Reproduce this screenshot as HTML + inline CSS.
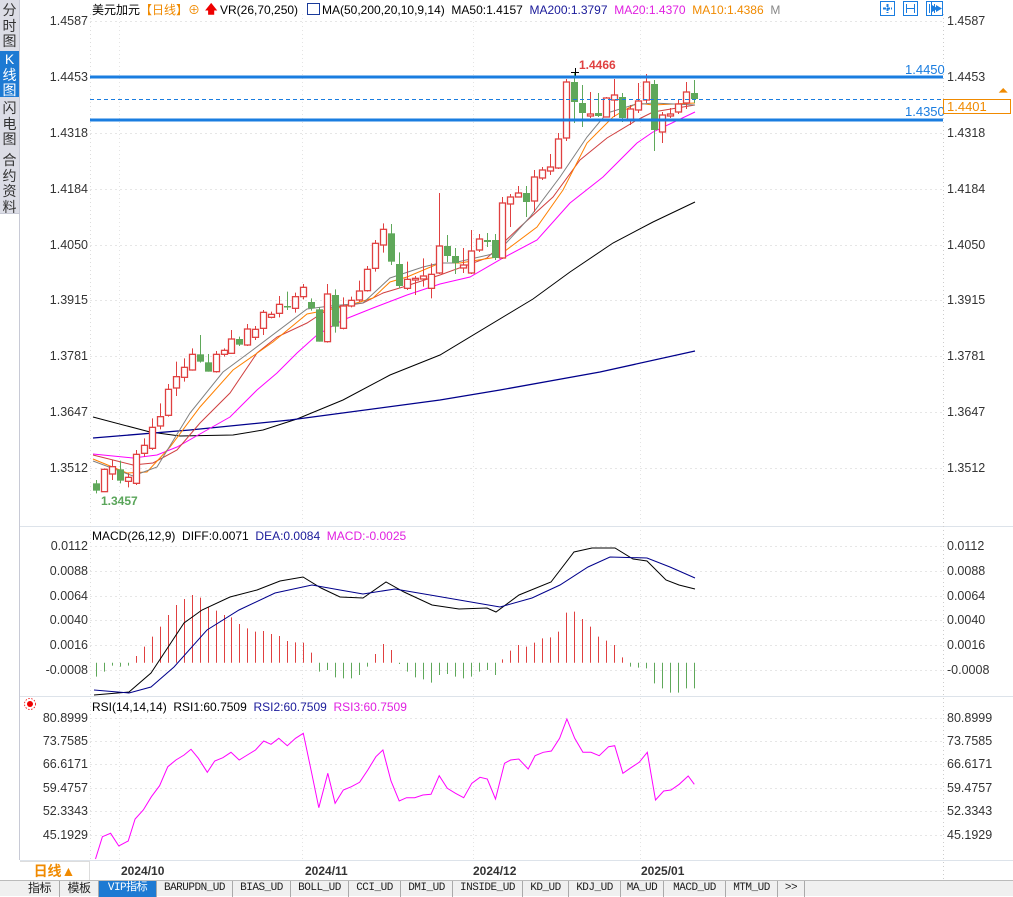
<!DOCTYPE html>
<html><head><meta charset="utf-8"><style>
*{margin:0;padding:0;box-sizing:border-box}
body{width:1013px;height:896px;overflow:hidden;background:#fff;font-family:"Liberation Sans","Noto Sans CJK SC",sans-serif;position:relative}
.sb{position:absolute;left:0;top:0;width:20px;height:213px;background:#dcdde6;border-right:1px solid #c8cad6}
.sb div{position:absolute;left:0;width:19px;font-size:14px;line-height:15.5px;text-align:center;color:#333}
.sbw{position:absolute;left:0;top:213px;width:20px;height:647px;border-right:1px solid #c8cad6;border-top:1px solid #c8cad6}
.t{position:absolute;font-size:12px;white-space:nowrap;line-height:14px}
.tabs{position:absolute;left:0;top:880px;width:1013px;height:16px;background:#f0f0f0;border-top:1px solid #bbb}
.tab{position:absolute;top:0;height:16px;border-right:1px solid #aaa;font-size:11px;line-height:15px;text-align:center;color:#222;font-family:"Liberation Mono","Noto Sans CJK SC",monospace;letter-spacing:-0.5px}
</style></head><body>
<div class="sb">
<div style="top:3px">分<br>时<br>图</div>
<div style="top:51px;height:46px;background:#1d7ad3;color:#fff;padding-top:1px">K<br>线<br>图</div>
<div style="top:101px">闪<br>电<br>图</div>
<div style="top:153px">合<br>约<br>资<br>料</div>
</div>
<div class="sbw"></div>
<svg id="s" width="1013" height="896" style="position:absolute;left:0;top:0" xmlns="http://www.w3.org/2000/svg"></svg>
<div class="t" style="left:92px;top:3px">美元加元<span style="color:#f08a00">【日线】⊕</span></div>
<div class="t" style="left:205px;top:2px;color:#e00;font-weight:bold">🡅</div>
<div class="t" style="left:220px;top:3px">VR(26,70,250)</div>
<div class="t" style="left:307px;top:3px;width:13px;height:12px;border:1px solid #1a3a9a"></div>
<div class="t" style="left:322px;top:3px">MA(50,200,20,10,9,14)&nbsp; MA50:1.4157&nbsp; <span style="color:#1a1a9a">MA200:1.3797</span>&nbsp; <span style="color:#e020e0">MA20:1.4370</span>&nbsp; <span style="color:#f08a00">MA10:1.4386</span>&nbsp; <span style="color:#888">M</span></div>
<div class="t" style="left:92px;top:529px">MACD(26,12,9)&nbsp; DIFF:0.0071&nbsp; <span style="color:#1a1a9a">DEA:0.0084</span>&nbsp; <span style="color:#e020e0">MACD:-0.0025</span></div>
<div class="t" style="left:92px;top:700px">RSI(14,14,14)&nbsp; RSI1:60.7509&nbsp; <span style="color:#1a1a9a">RSI2:60.7509</span>&nbsp; <span style="color:#e020e0">RSI3:60.7509</span></div>
<div class="t" style="left:579px;top:58px;color:#e04040;font-weight:bold">1.4466</div>
<div class="t" style="left:101px;top:494px;color:#5aa55a;font-weight:bold">1.3457</div>
<div class="t" style="left:905px;top:63px;color:#1a7de0;font-size:13px">1.4450</div>
<div class="t" style="left:905px;top:105px;color:#1a7de0;font-size:13px">1.4350</div>
<div class="t" style="left:943px;top:99px;width:68px;height:15px;border:1px solid #f08a00;color:#f08a00;padding-left:3px;font-size:13px">1.4401</div>
<div class="t" style="left:998px;top:84px;color:#f08a00;font-size:13px">⏶</div>
<div class="t" style="left:20px;top:861px;width:70px;height:19px;color:#f08a00;font-size:14px;font-weight:bold;text-align:center;line-height:19px;border-right:1px solid #ddd;border-top:1px solid #ddd">日线▲</div>
<div class="t" style="left:121px;top:864px;font-weight:bold;color:#333">2024/10</div>
<div class="t" style="left:305px;top:864px;font-weight:bold;color:#333">2024/11</div>
<div class="t" style="left:473px;top:864px;font-weight:bold;color:#333">2024/12</div>
<div class="t" style="left:641px;top:864px;font-weight:bold;color:#333">2025/01</div>
<div id="lab"></div>
<div class="tabs">
<div class="tab" style="left:20px;width:40px;font-family:'Liberation Sans','Noto Sans CJK SC',sans-serif;font-size:12px">指标</div>
<div class="tab" style="left:60px;width:39px;font-family:'Liberation Sans','Noto Sans CJK SC',sans-serif;font-size:12px">模板</div>
<div class="tab" style="left:99px;width:58px;background:#1d7ad3;color:#fff">VIP指标</div>
<div class="tab" style="left:157px;width:76px">BARUPDN_UD</div>
<div class="tab" style="left:233px;width:58px">BIAS_UD</div>
<div class="tab" style="left:291px;width:58px">BOLL_UD</div>
<div class="tab" style="left:349px;width:52px">CCI_UD</div>
<div class="tab" style="left:401px;width:52px">DMI_UD</div>
<div class="tab" style="left:453px;width:70px">INSIDE_UD</div>
<div class="tab" style="left:523px;width:46px">KD_UD</div>
<div class="tab" style="left:569px;width:52px">KDJ_UD</div>
<div class="tab" style="left:621px;width:43px">MA_UD</div>
<div class="tab" style="left:664px;width:62px">MACD_UD</div>
<div class="tab" style="left:726px;width:52px">MTM_UD</div>
<div class="tab" style="left:778px;width:27px">&gt;&gt;</div>
</div>
<script>
var S=document.getElementById('s'),h='';
function L(x1,y1,x2,y2,c,w,d){h+='<line x1="'+x1+'" y1="'+y1+'" x2="'+x2+'" y2="'+y2+'" stroke="'+c+'" stroke-width="'+(w||1)+'"'+(d?' stroke-dasharray="'+d+'"':'')+'/>';}
function P(pts,c,w){h+='<polyline fill="none" stroke="'+c+'" stroke-width="'+(w||1)+'" points="'+pts+'"/>';}
L(20,526.5,1013,526.5,'#dde3ea',1);L(20,696.5,1013,696.5,'#dde3ea',1);L(20,860.5,1013,860.5,'#dde3ea',1);
[119,302,473,640].forEach(function(x){L(x+.5,14,x+.5,860,'#e4e4e4',1,'1,3')});
L(943.5,14,943.5,880,'#ccc',1,'1,3');L(90.5,14,90.5,860,'#ddd',1,'1,3');
var lab='';
function ax(vals,ys){vals.forEach(function(v,i){var y=ys[i];L(90,y+.5,943,y+.5,'#e6e6e6',1,'2,3');
lab+='<div class="t" style="left:947px;top:'+(y-7)+'px;color:#333;font-size:12.5px">'+v+'</div>';
lab+='<div class="t" style="left:20px;width:68px;text-align:right;top:'+(y-7)+'px;color:#333;font-size:12.5px">'+v+'</div>';});}
ax(['1.4587','1.4453','1.4318','1.4184','1.4050','1.3915','1.3781','1.3647','1.3512'],[21,77,133,189,245,300,356,412,468]);
ax(['0.0112','0.0088','0.0064','0.0040','0.0016','-0.0008'],[546,571,596,620,645,670]);
ax(['80.8999','73.7585','66.6171','59.4757','52.3343','45.1929'],[718,741,764,788,811,835]);
document.getElementById('lab').innerHTML=lab;
[880,903,926].forEach(function(x){h+='<rect x="'+x+'.5" y="1.5" width="14" height="14" fill="#fff" stroke="#1a7de0"/>';});
h+='<rect x="931.5" y="1.5" width="11" height="14" fill="#fff" stroke="#1a7de0"/>';
L(883,8.5,892,8.5,'#1a7de0',2,'3,1');L(887.5,4,887.5,13,'#1a7de0',2,'3,1');
L(906.5,4,906.5,13,'#1a7de0',1);L(914.5,4,914.5,13,'#1a7de0',1);L(906,8.5,915,8.5,'#1a7de0',1);
L(929.5,4,929.5,13,'#1a7de0',1);h+='<path d="M932 5 L938 8.5 L932 12Z" fill="#1a7de0"/>';
L(934.5,4,934.5,13,'#1a7de0',1);h+='<path d="M936 5 L942 8.5 L936 12Z" fill="#1a7de0"/>';
P('93,417 150,432 180,436 233,435 263,430 297,419 343,400 390,375 440,355 533,299 570,272 613,243 653,222 695,202','#000');
P('93,438 190,430 290,420 440,400 500,390 600,372 695,351','#00008b',1.3);
P('93,454 133,458 157,455 177,447 207,430 230,417 257,390 277,373 297,353 317,335 343,320 373,308 407,295 440,284 470,277 503,258 537,240 570,203 603,177 637,143 653,132 695,112','#ff00ff');
P('93,455 133,465 153,463 177,450 200,423 230,393 257,353 277,337 307,323 330,308 363,303 383,293 403,287 440,275 487,258 520,227 553,197 580,160 607,138 637,120 653,112 695,105','#d04040');
P('93,459 127,473 147,472 170,447 200,407 233,370 273,342 307,314 343,307 373,298 390,282 407,277 440,263 460,263 497,257 537,227 563,190 587,143 613,117 637,103 653,105 695,103','#ff8000');
P('93,461 133,476 157,467 190,413 223,372 250,352 307,309 330,306 363,303 390,278 423,267 440,263 453,263 497,253 530,217 560,177 587,137 607,113 633,105 653,103 695,105','#808080');
var z4=[['g',790,812,780,820],['r',748,815,745,815],['r',740,762,720,780],['g',748,782,722,790],['r',772,784,760,802],['r',703,790,690,795],['r',676,700,655,710],['r',622,685,595,690],['r',590,618,550,628],['r',508,586,492,590],['r',470,504,425,528],['r',442,472,415,485],['r',403,450,385,452],['g',403,425,345,428],['g',427,455,402,455],['r',403,455,393,458],['r',391,403,385,410],['r',357,400,330,402],['g',357,374,350,378],['r',327,375,312,378],['r',328,352,318,360],['r',277,325,270,345],['r',283,292,275,295],['r',253,280,228,292],['g',258,262,215,270],['r',230,265,218,278],['r',202,230,192,238],['g',246,265,235,272],['g',268,365,262,365],['r',222,365,192,368],['g',225,320,208,338],['r',258,325,232,328],['r',241,258,230,262],['r',213,240,182,245],['r',148,212,138,215],['r',70,145,60,155],['r',28,75,10,98],['g',40,125,12,135],['g',132,198,97,205],['r',178,205,125,210],['r',175,180,168,225],['r',168,177,115,200],['r',163,205,130,235]];
var C=z4.map(function(a){return [a[0],220+a[1]/3,220+a[2]/3,220+a[3]/3,220+a[4]/3]});
var b=[['r',246,273,193,274],['g',246,256,235,262],['g',256,263,248,274],['r',265,268,248,273],['r',251,273,230,274],['r',239,250,234,252],['g',240,242,233,247],['g',240,258,234,260],['r',203,258,197,259],['r',197,204,194,227],['r',193,197,186,197],['g',193,202,186,217],['r',177,201,170,212],['r',170,178,167,180],['r',167,171,154,175],['r',139,168,133,169],['r',82,138,79,141],['g',82,102,72,123],['g',103,113,85,127],['r',114,116,92,118],['g',113,116,93,117],['r',98,117,97,117],['r',95,100,79,117],['g',97,118,93,122],['r',109,120,105,125],['r',101,110,83,113],['r',82,100,74,103],['g',84,130,80,151],['r',115,132,112,143],['r',114,116,108,118],['r',104,112,99,114],['r',92,103,82,109],['g',93,99,80,103]];
C=C.concat(b);
function X(i){return 96+i*7.97;}
C.forEach(function(c,i){var x=Math.round(X(i)),col=c[0]=='r'?'#e04040':'#5fa85a';
L(x+.5,c[3],x+.5,c[4],col,1);
var t=c[1],bt=c[2];if(bt-t<1.5)bt=t+1.5;
if(c[0]=='r')h+='<rect x="'+(x-2.5)+'" y="'+t+'" width="6" height="'+(bt-t)+'" fill="#fff" stroke="'+col+'" stroke-width="1.3"/>';
else h+='<rect x="'+(x-3)+'" y="'+t+'" width="7" height="'+(bt-t)+'" fill="'+col+'"/>';});
L(571,72.5,579,72.5,'#000',1);L(575.5,68,575.5,77,'#000',1);
L(90,77,943,77,'#1a7de0',3);L(90,120,943,120,'#1a7de0',3);L(90,99.5,943,99.5,'#1a7de0',1,'4,3');
var hz=[['g',470],['g',455],['g',437],['g',440],['g',437],['r',408],['r',380],['r',350],['r',320],['r',285],['r',255],['r',237],['r',225],['r',233],['r',262],['r',272],['r',285],['r',292],['r',312],['r',325],['r',335],['r',333],['r',342],['r',348],['r',363],['r',367],['r',368],['r',398],['g',455],['g',450],['g',472],['g',475],['g',475],['g',465],['g',440],['r',402],['r',372],['r',390],['g',432],['g',455],['g',472],['g',478],['g',488],['g',465],['g',462],['g',470],['g',475],['g',470],['g',455],['g',450],['g',465],['r',418],['r',392],['r',375],['r',380],['r',368],['r',355],['r',352],['r',335],['r',278],['r',275],['r',297],['r',320],['r',350],['r',362],['r',375],['r',412],['g',440],['g',443],['g',445],['g',490],['g',505],['g',518],['g',518],['g',505],['g',505]];
hz.forEach(function(a,i){var x=Math.round(X(i))+.5;L(x,662.7,x,520+a[1]/3,a[0]=='r'?'#e04040':'#5fa85a',1);});
P('94,695 129,692 151,673 184,623 202,610 230,597 257,590 280,581 303,577 321,588 340,597 363,598 386,582 404,592 432,605 459,609 487,608 496,612 519,595 551,582 574,552 592,548 615,548 633,559 647,561 666,580 679,585 695,589','#000');
P('94,690 129,693 151,687 174,667 207,630 239,610 275,593 312,585 340,590 363,594 395,589 436,596 500,607 532,598 560,585 588,567 610,557 647,558 670,567 695,578','#00008b');
var r=[[38,492],[55,425],[75,415],[95,453],[118,438],[135,372],[155,345],[175,305],[195,272],[215,215],[235,195],[255,180],[272,163],[290,190],[312,232],[330,198],[350,188],[370,172],[390,195],[410,180],[430,165],[450,138],[468,148],[487,130],[508,152],[528,130],[547,115],[567,230],[585,338],[607,235],[625,325],[645,285],[665,275],[685,262],[705,225],[725,185],[742,165],[762,258],[782,318],[800,308],[820,308],[840,300],[860,298],[880,242],[900,280],[920,295],[940,308],[960,265],[980,247],[998,252],[1018,312],[1040,205],[1055,195],[1075,192],[1098,222],[1115,182],[1135,172],[1155,168],[1175,130],[1193,72],[1212,130],[1232,172],[1252,172],[1272,182],[1295,155],[1310,152],[1330,235],[1350,218],[1370,202],[1390,172],[1410,315],[1430,288],[1448,285],[1468,268],[1490,243],[1505,268]];
P(r.map(function(p){return (80+p[0]/2.45).toFixed(1)+','+(695+p[1]/3).toFixed(1)}).join(' '),'#ff00ff');
h+='<circle cx="30" cy="704" r="3" fill="#e00"/><circle cx="30" cy="704" r="5.5" fill="none" stroke="#e00" stroke-width="0.8" stroke-dasharray="1.5,1.5"/>';
S.innerHTML=h;
</script>
</body></html>
